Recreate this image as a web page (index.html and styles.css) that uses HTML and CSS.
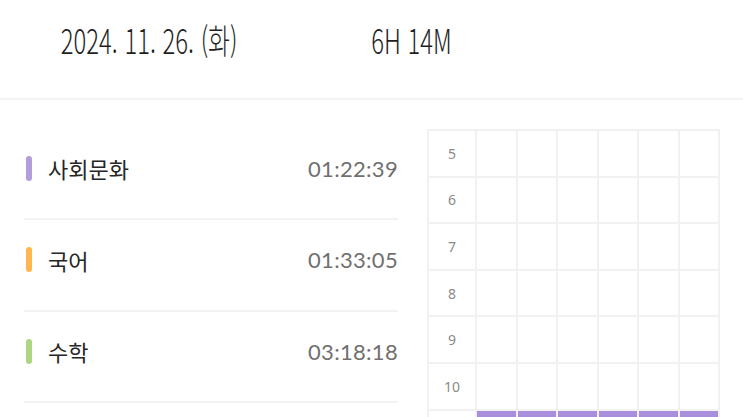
FILE: index.html
```
<!DOCTYPE html>
<html lang="ko">
<head>
<meta charset="utf-8">
<link rel="stylesheet" href="styles.css">
</head>
<body>
<header class="top">
  <div class="slot date-slot"><span class="headline">2024. 11. 26. (화)</span></div>
  <div class="slot total-slot"><span class="headline">6H 14M</span></div>
</header>
<main class="main">
  <ul class="subjects">
    <li class="subject"><span class="bar purple"></span><span class="name">사회문화</span><span class="time">01:22:39</span></li>
    <li class="subject"><span class="bar orange"></span><span class="name">국어</span><span class="time">01:33:05</span></li>
    <li class="subject"><span class="bar green"></span><span class="name">수학</span><span class="time">03:18:18</span></li>
  </ul>
  <div class="timetable">
    <div class="hour">5</div><div class="cell"></div><div class="cell"></div><div class="cell"></div><div class="cell"></div><div class="cell"></div><div class="cell"></div>
    <div class="hour">6</div><div class="cell"></div><div class="cell"></div><div class="cell"></div><div class="cell"></div><div class="cell"></div><div class="cell"></div>
    <div class="hour">7</div><div class="cell"></div><div class="cell"></div><div class="cell"></div><div class="cell"></div><div class="cell"></div><div class="cell"></div>
    <div class="hour">8</div><div class="cell"></div><div class="cell"></div><div class="cell"></div><div class="cell"></div><div class="cell"></div><div class="cell"></div>
    <div class="hour">9</div><div class="cell"></div><div class="cell"></div><div class="cell"></div><div class="cell"></div><div class="cell"></div><div class="cell"></div>
    <div class="hour">10</div><div class="cell"></div><div class="cell"></div><div class="cell"></div><div class="cell"></div><div class="cell"></div><div class="cell"></div>
    <div class="hour"></div><div class="cell on"></div><div class="cell on"></div><div class="cell on"></div><div class="cell on"></div><div class="cell on"></div><div class="cell on"></div>
  </div>
</main>
</body>
</html>
```

FILE: styles.css
```
html, body {
  margin: 0;
  padding: 0;
  background: #ffffff;
}
body {
  width: 743px;
  height: 417px;
  overflow: hidden;
  font-family: "Noto Sans CJK KR", "Noto Sans", sans-serif;
  color: #222222;
}
.top {
  height: 100px;
  box-sizing: border-box;
  padding-top: 19px;
  display: flex;
  align-items: flex-start;
  border-bottom: 2px solid #f3f3f3;
}
.slot {
  display: flex;
  justify-content: center;
}
.date-slot { width: 298px; }
.total-slot { width: 226px; }
.headline {
  display: inline-block;
  font-family: "Noto Sans CJK KR", sans-serif;
  font-weight: 300;
  font-size: 34px;
  line-height: 42px;
  letter-spacing: 0;
  color: #1e1e1e;
  white-space: nowrap;
  transform: scaleX(0.7);
}
.main {
  display: flex;
  align-items: flex-start;
  padding: 28.5px 0 0 24px;
  gap: 29px;
}
.subjects {
  list-style: none;
  margin: 0;
  padding: 0;
  width: 374px;
  flex: none;
}
.subject {
  box-sizing: content-box;
  height: 79.5px;
  padding-bottom: 10px;
  border-bottom: 2px solid #f2f2f2;
  display: flex;
  align-items: center;
}
.bar {
  width: 6px;
  height: 25px;
  border-radius: 3px;
  margin: 0 16px 0 2px;
  flex: none;
}
.purple { background: #b39ddb; }
.orange { background: #ffb74d; }
.green { background: #aed581; }
.name {
  font-size: 22px;
  font-weight: 400;
  color: #262626;
  flex: 1;
}
.time {
  font-family: "Lato", "Noto Sans", sans-serif;
  font-weight: 400;
  font-size: 22px;
  color: #707070;
  letter-spacing: 0.3px;
}
.timetable {
  margin-top: 0.5px;
  width: 293px;
  flex: none;
  box-sizing: border-box;
  display: grid;
  grid-template-columns: 46px repeat(6, 1fr);
  grid-auto-rows: 44.6px;
  gap: 2px;
  padding: 2px;
  background: #f1f1f1;
}
.hour {
  background: #ffffff;
  display: flex;
  align-items: center;
  justify-content: center;
  font-family: "Noto Sans", sans-serif;
  font-size: 14px;
  color: #8a8a8a;
}
.cell { background: #ffffff; }
.cell.on { background: #a98fdb; }
```
